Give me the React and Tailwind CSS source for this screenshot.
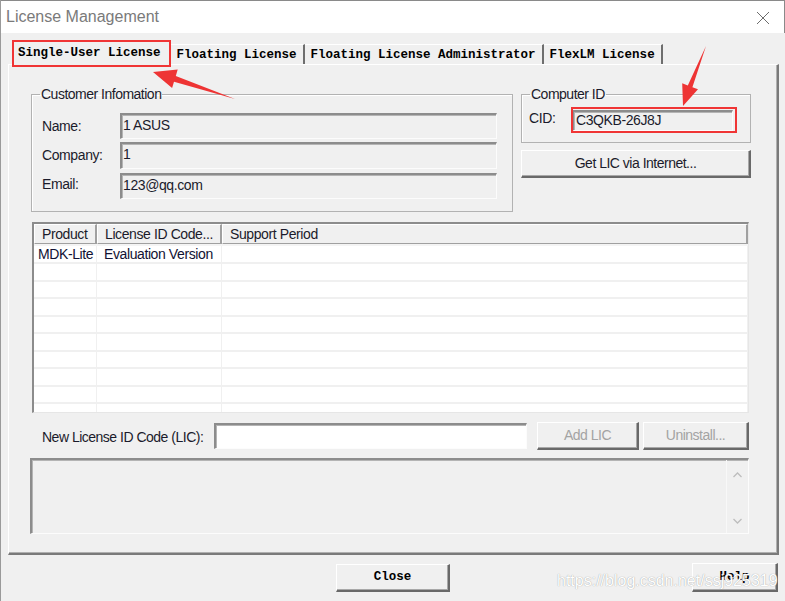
import React from "react";

const SANS = "font-['Liberation_Sans',Arial,sans-serif]";
const MONO = "font-['Liberation_Mono','Courier_New',monospace]";

function Sunken({ className = "", children }) {
  return (
    <div
      className={
        "border-t-2 border-l-2 border-r border-b border-t-[#8c8c8c] border-l-[#8c8c8c] border-r-[#fcfcfc] border-b-[#fcfcfc] shadow-[inset_1px_1px_0_#b4b4b4] " +
        className
      }
    >
      {children}
    </div>
  );
}

function Raised({ className = "", children }) {
  return (
    <div
      className={
        "flex items-center justify-center border-t border-l border-r-2 border-b-2 border-t-white border-l-white border-r-[#696969] border-b-[#696969] shadow-[inset_-1px_-1px_0_#a8a8a8] bg-[#f0f0f0] " +
        className
      }
    >
      {children}
    </div>
  );
}

function Tab({ children, selected }) {
  if (selected) {
    return (
      <div
        className={`relative z-10 -mb-px h-[25px] pl-[5px] pr-[8px] flex items-center bg-[#f0f0f0] border-t border-l border-white border-r-2 border-r-[#6e6e6e] ${MONO} font-bold text-[12.5px] text-black`}
      >
        {children}
      </div>
    );
  }
  return (
    <div
      className={`h-[20px] pl-[6px] pr-[6px] pt-[1px] flex items-center bg-[#f0f0f0] border-t border-white border-r-2 border-r-[#6e6e6e] ${MONO} font-bold text-[12.5px] text-black`}
    >
      {children}
    </div>
  );
}

const rowHeights = [18, 18, 17, 18, 17, 18, 17, 18, 17, 18];

export default function App() {
  return (
    <div
      className={`relative w-[785px] h-[601px] overflow-hidden bg-[#f0f0f0] border-l border-l-[#9a9a9a] ${SANS}`}
    >
      {/* Title bar */}
      <div className="h-[33px] bg-white border-t border-t-[#8a8a8a] border-r border-r-[#8a8a8a] flex items-center justify-between pl-[5px] pr-[14px]">
        <span className="text-[16px] text-[#7a7a7a] leading-none">License Management</span>
        <svg width="14" height="14" viewBox="0 0 14 14" className="mt-[1px]">
          <path d="M1 1 L13 13 M13 1 L1 13" stroke="#6d6d6d" strokeWidth="1" fill="none" />
        </svg>
      </div>

      {/* Main */}
      <div className="pl-[7px]">
        {/* Tabs */}
        <div className="flex items-end pl-[4px] pt-[7px]">
          <Tab selected>Single-User License</Tab>
          <Tab>Floating License</Tab>
          <Tab>Floating License Administrator</Tab>
          <Tab>FlexLM License</Tab>
        </div>

        {/* Panel */}
        <div className="w-[771px] h-[491px] border-t border-l border-t-white border-l-white border-r-2 border-b-2 border-r-[#7a7a7a] border-b-[#7a7a7a] shadow-[inset_-1px_-1px_0_#b0b0b0]">
          {/* Top row */}
          <div className="flex pt-[21px] pl-[22px]">
            <fieldset className="w-[482px] h-[126px] border border-[#b2b2b2] shadow-[inset_1px_1px_0_#fff] pl-[10px]">
              <legend className="ml-[-2px] px-[1px] text-[14px] leading-[16px] tracking-[-0.5px] text-[#1b1b2b]">
                Customer Infomation
              </legend>
              <div className="pt-[11px] flex flex-col text-[14px] tracking-[-0.4px] text-[#1b1b2b]">
                <div className="flex items-center h-[26px]">
                  <span className="w-[78px]">Name:</span>
                  <Sunken className="w-[377px] h-[26px] bg-[#f0f0f0] pl-[1px] leading-[20px]">1 ASUS</Sunken>
                </div>
                <div className="flex items-center h-[27px] mt-[3px]">
                  <span className="w-[78px]">Company:</span>
                  <Sunken className="w-[377px] h-[27px] bg-[#f0f0f0] pl-[1px] leading-[20px]">1</Sunken>
                </div>
                <div className="flex items-center h-[26px] mt-[4px]">
                  <span className="w-[78px] -mt-[3px]">Email:</span>
                  <Sunken className="w-[377px] h-[26px] bg-[#f0f0f0] pl-[1px] leading-[20px]">123@qq.com</Sunken>
                </div>
              </div>
            </fieldset>

            <div className="ml-[8px] flex flex-col">
              <fieldset className="w-[230px] h-[57px] border border-[#b2b2b2] shadow-[inset_1px_1px_0_#fff] pl-[7px]">
                <legend className="ml-[1px] px-[1px] text-[14px] leading-[16px] tracking-[-0.5px] text-[#1b1b2b]">
                  Computer ID
                </legend>
                <div className="pt-[8px] flex items-center text-[14px] tracking-[-0.4px] text-[#1b1b2b]">
                  <span className="w-[43px] -mt-[4px]">CID:</span>
                  <Sunken className="w-[161px] h-[21px] bg-[#f0f0f0] pl-[2px] leading-[17px]">C3QKB-26J8J</Sunken>
                </div>
              </fieldset>
              <Raised className="mt-[7px] w-[230px] h-[28px] text-[14px] tracking-[-0.5px] text-[#1b1b2b]">
                Get LIC via Internet...
              </Raised>
            </div>
          </div>

          {/* List view */}
          <div className="ml-[23px] mt-[10px] w-[717px] h-[191px] border-t-2 border-l-2 border-r border-b border-t-[#8c8c8c] border-l-[#8c8c8c] border-r-[#e6e6e6] border-b-[#e6e6e6] bg-white overflow-hidden">
            <div className="flex h-[20px] bg-[#f0f0f0] text-[14px] tracking-[-0.4px] text-[#1b1b2b]">
              <div className="w-[63px] pl-[7px] flex items-center border-t border-l border-white border-r-2 border-b border-r-[#a0a0a0] border-b-[#a0a0a0]">Product</div>
              <div className="w-[125px] pl-[7px] flex items-center border-t border-l border-white border-r-2 border-b border-r-[#a0a0a0] border-b-[#a0a0a0]">License ID Code...</div>
              <div className="w-[526px] pl-[7px] flex items-center border-t border-l border-white border-r-2 border-b border-r-[#a0a0a0] border-b-[#a0a0a0]">Support Period</div>
            </div>
            <div className="h-[2px] bg-[#f4f4f4]" />
            {rowHeights.map((h, i) => (
              <div
                key={i}
                className="flex border-b-2 border-b-[#f0f0f0] text-[14px] tracking-[-0.4px] text-[#111133]"
                style={{ height: h }}
              >
                <div className="w-[63px] pl-[4px] border-r border-r-[#f0f0f0] leading-[17px]">{i === 0 ? "MDK-Lite" : ""}</div>
                <div className="w-[125px] pl-[7px] border-r border-r-[#f0f0f0] leading-[17px]">{i === 0 ? "Evaluation Version" : ""}</div>
                <div className="w-[526px] border-r border-r-[#f0f0f0]" />
              </div>
            ))}
          </div>

          {/* LIC row */}
          <div className="flex items-start mt-[9px] ml-[33px]">
            <span className="w-[172px] mt-[5px] text-[14px] tracking-[-0.5px] text-[#1b1b2b]">New License ID Code (LIC):</span>
            <Sunken className="mt-[1px] w-[313px] h-[26px] bg-white" />
            <Raised className="ml-[10px] w-[102px] h-[28px] text-[14px] tracking-[-0.5px] text-[#a3a3a3]">Add LIC</Raised>
            <Raised className="ml-[4px] w-[106px] h-[28px] text-[14px] tracking-[-0.5px] text-[#a3a3a3]">Uninstall...</Raised>
          </div>

          {/* Text area */}
          <Sunken className="ml-[21px] mt-[8px] w-[719px] h-[76px] bg-[#f0f0f0] flex justify-end">
            <div className="w-[22px] h-full border-l border-l-[#f8f8f8] flex flex-col items-center justify-between pt-[12px] pb-[9px]">
              <svg width="9" height="6" viewBox="0 0 9 6">
                <path d="M0.5 5 L4.5 1 L8.5 5" stroke="#bdbdbd" strokeWidth="1.3" fill="none" />
              </svg>
              <svg width="9" height="6" viewBox="0 0 9 6">
                <path d="M0.5 1 L4.5 5 L8.5 1" stroke="#bdbdbd" strokeWidth="1.3" fill="none" />
              </svg>
            </div>
          </Sunken>
        </div>

        {/* Bottom buttons */}
        <div className="flex items-start mt-[8px]">
          <Raised className={`ml-[328px] mt-[1px] w-[114px] h-[28px] ${MONO} font-bold text-[12.5px] text-black`}>Close</Raised>
          <Raised className={`ml-[242px] w-[86px] h-[29px] ${MONO} font-bold text-[12.5px] text-black`}>Help</Raised>
        </div>
      </div>

      {/* Watermark */}
      <div className="absolute z-20 left-[556px] top-[571px] text-[16px] leading-[20px] text-white [text-shadow:0_0_1px_#8a8a8a] pointer-events-none">
        https://blog.csdn.net/ssj925319
      </div>

      {/* Annotation boxes */}
      <div className="absolute z-20 left-[11px] top-[40px] w-[159px] h-[27px] border-2 border-[#f03535] pointer-events-none" />
      <div className="absolute z-20 left-[570px] top-[107px] w-[166px] h-[26px] border-2 border-[#f03535] pointer-events-none" />

      {/* Annotation arrows */}
      <svg className="absolute z-20 left-0 top-0 pointer-events-none" width="785" height="601" viewBox="0 0 785 601">
        <polygon
          points="234,99 174.8,75.9 176.7,69.6 152,72 171.1,88 173,81.7"
          fill="#ee3434"
        />
        <polygon
          points="705,46 691.4,87.2 697,89.3 682,106 681.2,83.3 686.8,85.4"
          fill="#ee3434"
        />
      </svg>
    </div>
  );
}
